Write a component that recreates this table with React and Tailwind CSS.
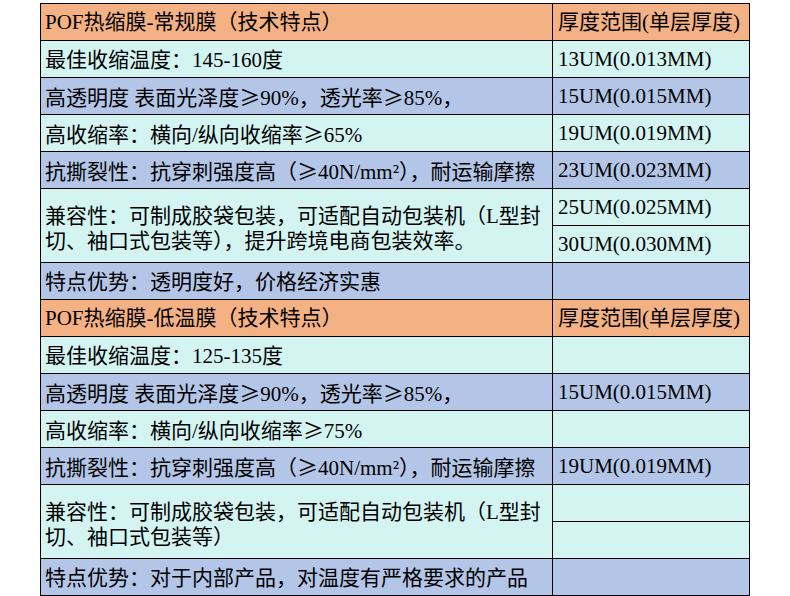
const ORANGE = "bg-[#f4b183]";
const CYAN = "bg-[#d4f4f2]";
const BLUE = "bg-[#b4c6e7]";

const sections = [
  {
    title: "POF热缩膜-常规膜（技术特点）",
    rows: [
      { bg: CYAN, text: ["最佳收缩温度：145-160度"], sizes: ["13UM(0.013MM)"] },
      { bg: BLUE, text: ["高透明度 表面光泽度≥90%，透光率≥85%，"], sizes: ["15UM(0.015MM)"] },
      { bg: CYAN, text: ["高收缩率：横向/纵向收缩率≥65%"], sizes: ["19UM(0.019MM)"] },
      { bg: BLUE, text: ["抗撕裂性：抗穿刺强度高（≥40N/mm²），耐运输摩擦"], sizes: ["23UM(0.023MM)"] },
      {
        bg: CYAN,
        text: ["兼容性：可制成胶袋包装，可适配自动包装机（L型封", "切、袖口式包装等），提升跨境电商包装效率。"],
        sizes: ["25UM(0.025MM)", "30UM(0.030MM)"],
      },
      { bg: BLUE, text: ["特点优势：透明度好，价格经济实惠"], sizes: [""] },
    ],
  },
  {
    title: "POF热缩膜-低温膜（技术特点）",
    rows: [
      { bg: CYAN, text: ["最佳收缩温度：125-135度"], sizes: [""] },
      { bg: BLUE, text: ["高透明度 表面光泽度≥90%，透光率≥85%，"], sizes: ["15UM(0.015MM)"] },
      { bg: CYAN, text: ["高收缩率：横向/纵向收缩率≥75%"], sizes: [""] },
      { bg: BLUE, text: ["抗撕裂性：抗穿刺强度高（≥40N/mm²），耐运输摩擦"], sizes: ["19UM(0.019MM)"] },
      {
        bg: CYAN,
        text: ["兼容性：可制成胶袋包装，可适配自动包装机（L型封", "切、袖口式包装等）"],
        sizes: ["", ""],
      },
      { bg: BLUE, text: ["特点优势：对于内部产品，对温度有严格要求的产品"], sizes: [""] },
    ],
  },
];

// ≥ is full width in the original Song font, keep it in the CJK face
function Txt({ s }) {
  const parts = s.split("≥");
  return parts.map((p, i) => (
    <span key={i}>
      {i > 0 && <span className="inline-block w-[21px] text-center font-['Noto_Sans_CJK_SC']">≥</span>}
      {p}
    </span>
  ));
}

export default function App() {
  return (
    <div className="w-[790px] h-[596px] bg-white overflow-hidden pt-[3px] font-['Liberation_Serif','Noto_Sans_CJK_SC',serif] text-[21px] text-black">
      <div className="ml-[40px] w-[710px] border-l border-t border-black grid grid-cols-[512px_197px]">
        {sections.map((sec) => (
          <div key={sec.title} className="contents">
            <div className={`${ORANGE} h-[37px] border-r border-b border-black flex items-center pl-[4px] pt-[2px] whitespace-nowrap`}>
              {sec.title}
            </div>
            <div className={`${ORANGE} h-[37px] border-r border-b border-black flex items-center pl-[5px] pt-[2px] whitespace-nowrap`}>
              厚度范围(单层厚度)
            </div>

            {sec.rows.map((r, i) => (
              <div key={i} className="contents">
                <div
                  className={`${r.bg} border-r border-b border-black flex flex-col justify-center pl-[4px] whitespace-nowrap ${
                    r.sizes.length > 1 ? "row-span-2 h-[74px] pt-[6px]" : "h-[37px] pt-[3px]"
                  }`}
                >
                  {r.text.map((t) => (
                    <div key={t} className={r.sizes.length > 1 ? "h-[25px] leading-[25px]" : ""}>
                      <Txt s={t} />
                    </div>
                  ))}
                </div>
                {r.sizes.map((sz, j) => (
                  <div
                    key={j}
                    className={`${r.bg} h-[37px] border-r border-b border-black flex items-center pl-[5px] pt-[2px] whitespace-nowrap`}
                  >
                    {sz}
                  </div>
                ))}
              </div>
            ))}
          </div>
        ))}
      </div>
    </div>
  );
}
